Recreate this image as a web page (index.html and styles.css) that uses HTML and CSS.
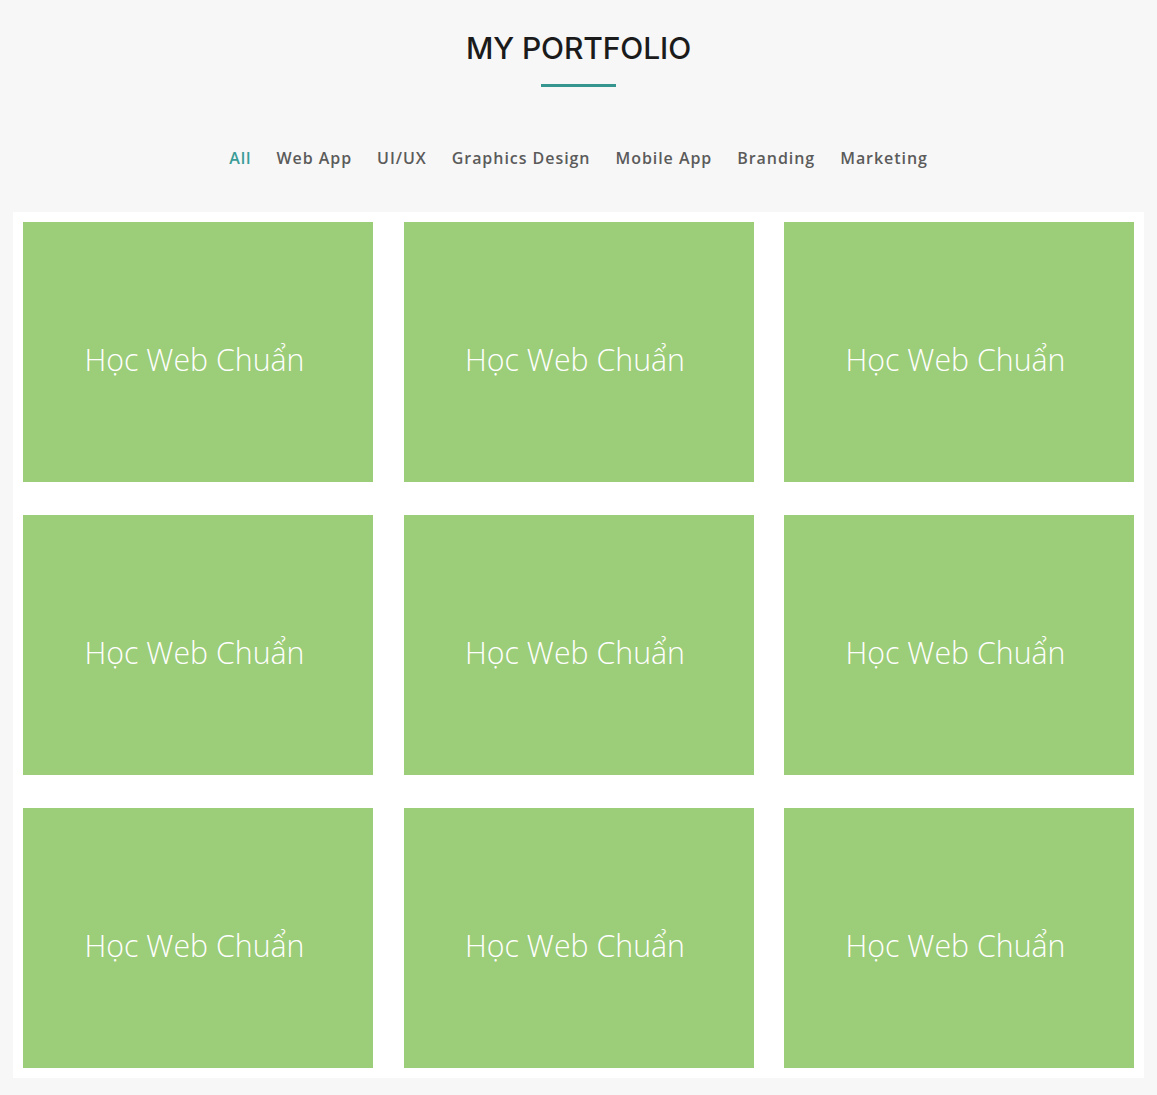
FILE: index.html
```html
<!DOCTYPE html>
<html lang="vi">
<head>
<meta charset="utf-8">
<title>My Portfolio</title>
<link rel="stylesheet" href="styles.css">
</head>
<body>
<section class="portfolio">
  <h2 class="title">MY PORTFOLIO</h2>
  <div class="title-bar"></div>
  <ul class="filters">
    <li class="filter active">All</li>
    <li class="filter">Web App</li>
    <li class="filter">UI/UX</li>
    <li class="filter">Graphics Design</li>
    <li class="filter">Mobile App</li>
    <li class="filter">Branding</li>
    <li class="filter">Marketing</li>
  </ul>
  <div class="panel">
    <div class="grid">
      <div class="tile"><span>Học Web Chuẩn</span></div>
      <div class="tile"><span>Học Web Chuẩn</span></div>
      <div class="tile"><span>Học Web Chuẩn</span></div>
      <div class="tile"><span>Học Web Chuẩn</span></div>
      <div class="tile"><span>Học Web Chuẩn</span></div>
      <div class="tile"><span>Học Web Chuẩn</span></div>
      <div class="tile"><span>Học Web Chuẩn</span></div>
      <div class="tile"><span>Học Web Chuẩn</span></div>
      <div class="tile"><span>Học Web Chuẩn</span></div>
    </div>
  </div>
</section>
</body>
</html>
```
FILE: styles.css
```css
html, body {
  margin: 0;
  padding: 0;
  background: #f7f7f7;
}
body {
  font-family: "Open Sans", "Liberation Sans", sans-serif;
}
.portfolio {
  padding: 30px 13px 0;
  display: flex;
  flex-direction: column;
  align-items: center;
}
.title {
  margin: 0;
  font-family: "Inter", "Open Sans", sans-serif;
  font-weight: 500;
  font-size: 30px;
  line-height: 36px;
  color: #1b1b1b;
  letter-spacing: -0.1px;
}
.title-bar {
  width: 75px;
  height: 3px;
  background: #35958f;
  margin-top: 18px;
}
.filters {
  list-style: none;
  margin: 58px 0 0;
  padding: 0;
  display: flex;
  gap: 25px;
}
.filter {
  font-size: 16px;
  font-weight: 600;
  letter-spacing: 0.95px;
  line-height: 26px;
  color: #5b5b5b;
}
.filter.active {
  color: #3a9c97;
}
.panel {
  margin-top: 41px;
  align-self: stretch;
  background: #fff;
  padding: 10px;
}
.grid {
  display: grid;
  grid-template-columns: repeat(3, 350px);
  justify-content: space-between;
  row-gap: 33px;
}
.tile {
  height: 260px;
  background: #9ccd79;
  display: flex;
  align-items: center;
  justify-content: center;
  padding: 15px 7px 0 0;
  box-sizing: border-box;
}
.tile span {
  font-weight: 300;
  font-size: 30.3px;
  color: #fff;
}
```
